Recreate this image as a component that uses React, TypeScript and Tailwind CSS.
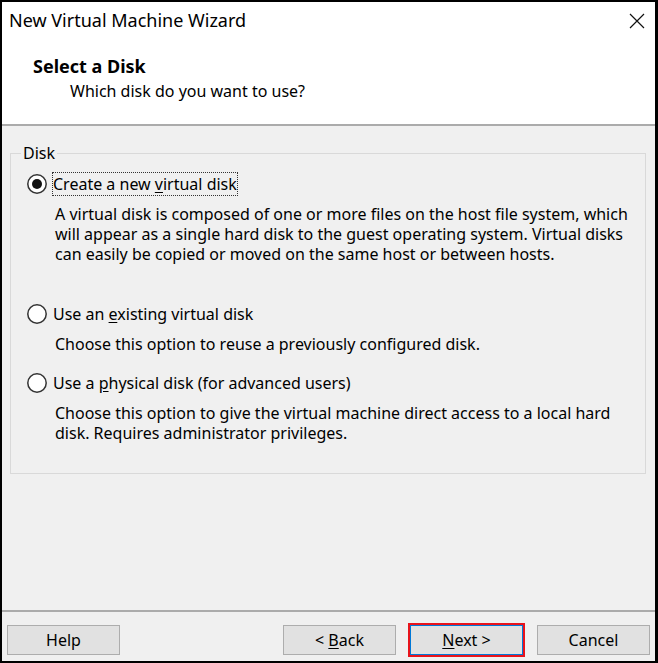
import React from "react";

type Option = {
  id: string;
  before: string;
  key: string;
  after: string;
  lines: string[];
  checked?: boolean;
  focused?: boolean;
};

const OPTIONS: Option[] = [
  {
    id: "new",
    before: "Create a new ",
    key: "v",
    after: "irtual disk",
    checked: true,
    focused: true,
    lines: [
      "A virtual disk is composed of one or more files on the host file system, which",
      "will appear as a single hard disk to the guest operating system. Virtual disks",
      "can easily be copied or moved on the same host or between hosts.",
    ],
  },
  {
    id: "existing",
    before: "Use an ",
    key: "e",
    after: "xisting virtual disk",
    lines: ["Choose this option to reuse a previously configured disk."],
  },
  {
    id: "physical",
    before: "Use a ",
    key: "p",
    after: "hysical disk (for advanced users)",
    lines: [
      "Choose this option to give the virtual machine direct access to a local hard",
      "disk. Requires administrator privileges.",
    ],
  },
];

const GAPS = ["mt-[9px]", "mt-[38px]", "mt-[17px]"];

function RadioDot({ checked }: { checked?: boolean }) {
  return (
    <svg width="20" height="20" viewBox="0 0 20 20" className="shrink-0">
      <circle cx="10" cy="10" r="9.2" fill="#ffffff" stroke="#333333" strokeWidth="1.5" />
      {checked && <circle cx="10" cy="10" r="5" fill="#111111" />}
    </svg>
  );
}

function WinButton({ children, primary }: { children: React.ReactNode; primary?: boolean }) {
  return (
    <button
      className={`w-[113px] h-[30px] bg-[#e1e1e1] border text-[16px] text-black leading-none ${
        primary ? "border-[#0078d7] outline-2 outline-[#e8141c]" : "border-[#adadad]"
      }`}
    >
      {children}
    </button>
  );
}

export default function App() {
  return (
    <div className="w-[658px] h-[663px] border-2 border-r-[3px] border-black bg-[#f0f0f0] flex flex-col font-['Noto_Sans',sans-serif] text-black">
      {/* header */}
      <div className="bg-white h-[124px] border-b-2 border-[#ababab] shrink-0">
        <div className="h-[36px] flex items-center justify-between pl-[7px] pr-[10px]">
          <span className="text-[18px] leading-none">New Virtual Machine Wizard</span>
          <svg width="16" height="16" viewBox="0 0 16 16" className="mt-[1px]">
            <path d="M1 1 L15 15 M15 1 L1 15" stroke="#111" strokeWidth="1.2" fill="none" />
          </svg>
        </div>
        <div className="mt-[17px] pl-[31px] text-[18px] font-bold leading-[22px]">Select a Disk</div>
        <div className="mt-[3px] pl-[68px] text-[16px] leading-[22px]">Which disk do you want to use?</div>
      </div>

      {/* body */}
      <div className="flex-1">
        <fieldset className="mt-[17px] ml-[8px] w-[636px] border border-[#d9d9d9] pb-[30px]">
          <legend className="ml-[10px] px-[2px] text-[16px] leading-[20px]">Disk</legend>
          {OPTIONS.map((o, i) => (
            <div key={o.id} className={GAPS[i]}>
              <div className="h-[24px] flex items-center pl-[16px]">
                <RadioDot checked={o.checked} />
                <span
                  className={`ml-[5px] border text-[16px] leading-[22px] ${
                    o.focused ? "border-dotted border-[#333]" : "border-transparent"
                  }`}
                >
                  {o.before}
                  <u className="underline-offset-2">{o.key}</u>
                  {o.after}
                </span>
              </div>
              <div className="mt-[8px] ml-[44px] text-[16px] leading-[20px] whitespace-nowrap">
                {o.lines.map((l) => (
                  <div key={l}>{l}</div>
                ))}
              </div>
            </div>
          ))}
        </fieldset>
      </div>

      {/* footer */}
      <div className="shrink-0 border-t-2 border-[#ababab] h-[51px] flex items-start pt-[13px] pl-[5px] pr-[5px]">
        <WinButton>Help</WinButton>
        <div className="ml-auto flex gap-[14px]">
          <WinButton>
            &lt; <u className="underline-offset-2">B</u>ack
          </WinButton>
          <WinButton primary>
            <u className="underline-offset-2">N</u>ext &gt;
          </WinButton>
          <WinButton>Cancel</WinButton>
        </div>
      </div>
    </div>
  );
}
